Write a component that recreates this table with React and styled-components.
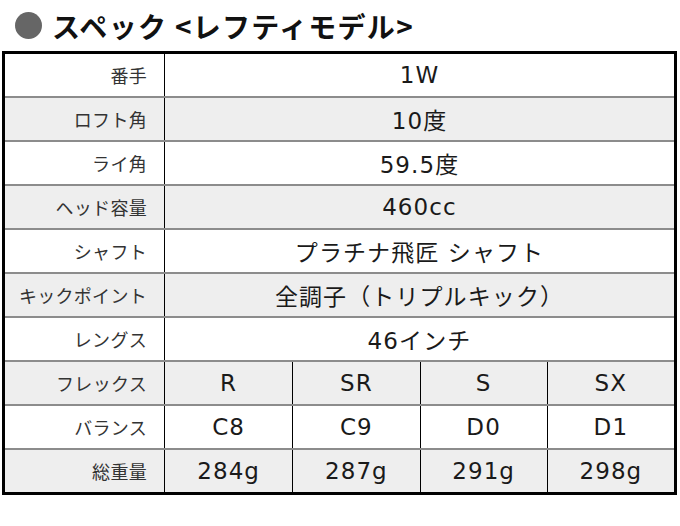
import React from 'react';
import styled, { createGlobalStyle } from 'styled-components';

const GlobalStyle = createGlobalStyle`
  html, body {
    margin: 0;
    padding: 0;
    background: #ffffff;
  }
  body {
    font-family: "Noto Sans CJK JP", "Noto Sans", sans-serif;
    color: #111;
  }
`;

const Page = styled.div`
  width: 680px;
  height: 526px;
  background: #ffffff;
`;

// Section heading with grey dot
const Heading = styled.h2`
  display: flex;
  align-items: center;
  gap: 10px;
  height: 51px;
  margin: 0;
  padding: 0 0 0 15px;
  box-sizing: border-box;
  font-size: 28px;
  font-weight: 700;
  color: #111;
  letter-spacing: 1.3px;
  white-space: pre;
`;

const Dot = styled.span`
  width: 27px;
  height: 27px;
  border-radius: 50%;
  background: #666666;
  flex-shrink: 0;
`;

// Spec table
const Table = styled.div`
  margin-left: 2px;
  width: 675px;
  box-sizing: border-box;
  border: 3px solid #000;
`;

const Row = styled.div`
  display: grid;
  grid-template-columns: 160px ${({ $cols }) => ($cols > 1 ? `repeat(${$cols}, 1fr)` : '1fr')};
  height: 44px;
  box-sizing: border-box;
  background: ${({ $shade }) => ($shade ? '#eeeeee' : '#ffffff')};
  border-bottom: 2px solid #8c8c8c;

  &:last-child {
    height: 42px;
    border-bottom: none;
  }
`;

const Label = styled.div`
  display: flex;
  align-items: center;
  justify-content: flex-end;
  padding-right: 17px;
  font-size: 18px;
  letter-spacing: 0.3px;
  color: #333;
  border-right: 1px solid #000;
`;

const Value = styled.div`
  display: flex;
  align-items: center;
  justify-content: center;
  font-family: "DejaVu Sans", "Noto Sans CJK JP", sans-serif;
  font-size: 23px;
  letter-spacing: 1.1px;
  color: #1a1a1a;
  white-space: pre;

  & + & {
    border-left: 1px solid #000;
  }
`;

const specs = [
  { label: '番手', values: ['1W'] },
  { label: 'ロフト角', values: ['10度'] },
  { label: 'ライ角', values: ['59.5度'] },
  { label: 'ヘッド容量', values: ['460cc'] },
  { label: 'シャフト', values: ['プラチナ飛匠 シャフト'] },
  { label: 'キックポイント', values: ['全調子（トリプルキック）'] },
  { label: 'レングス', values: ['46インチ'] },
  { label: 'フレックス', values: ['R', 'SR', 'S', 'SX'] },
  { label: 'バランス', values: ['C8', 'C9', 'D0', 'D1'] },
  { label: '総重量', values: ['284g', '287g', '291g', '298g'] },
];

const App = () => {
  return (
    <Page>
      <GlobalStyle />
      <Heading>
        <Dot />
        スペック &lt;レフティモデル&gt;
      </Heading>
      <Table>
        {specs.map((spec, i) => (
          <Row key={spec.label} $cols={spec.values.length} $shade={i % 2 === 1}>
            <Label>{spec.label}</Label>
            {spec.values.map((v, j) => (
              <Value key={j}>{v}</Value>
            ))}
          </Row>
        ))}
      </Table>
    </Page>
  );
};

export default App;
